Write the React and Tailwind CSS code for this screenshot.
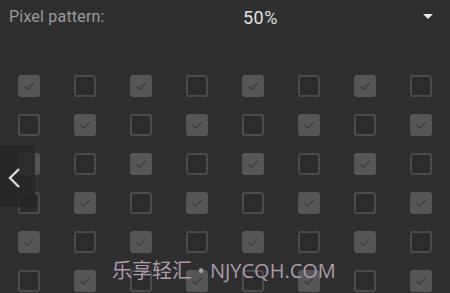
import React from "react";

function Box({ checked }) {
  if (checked) {
    return (
      <div className="w-[22px] h-[22px] rounded-[3px] bg-[#565656] flex items-center justify-center">
        <svg width="14" height="14" viewBox="0 0 14 14">
          <path d="M2.5 7.2 L5.6 10.2 L11.5 4" fill="none" stroke="#3e3e3e" strokeWidth="1.6" />
        </svg>
      </div>
    );
  }
  return <div className="w-[22px] h-[22px] rounded-[3px] border-2 border-[#4b4b4b] bg-[#2c2c2c]" />;
}

export default function App() {
  const rows = [0, 1, 2, 3, 4, 5];
  const cols = [0, 1, 2, 3, 4, 5, 6, 7];
  return (
    <div className="relative w-[450px] h-[293px] overflow-hidden bg-[#2f2f2f]" style={{ fontFamily: "Roboto, 'Noto Sans CJK SC', sans-serif" }}>
      <div className="flex items-center h-[34px] pl-[9px] pr-[17px]">
        <div className="w-[234px] text-[16px] text-[#9a9a9a] tracking-[0.2px]">Pixel pattern:</div>
        <div className="flex-1 text-[18px] text-[#e0e0e0] tracking-[0.5px]">50%</div>
        <svg width="10" height="6" viewBox="0 0 10 6">
          <path d="M0 0 L10 0 L5 5 Z" fill="#e8e8e8" />
        </svg>
      </div>
      <div className="flex flex-col gap-[17px] px-[18px] pt-[41px]">
        {rows.map((r) => (
          <div key={r} className="flex justify-between">
            {cols.map((c) => (
              <Box key={c} checked={(r + c) % 2 === 0} />
            ))}
          </div>
        ))}
      </div>
      <div className="absolute left-0 top-[145px] w-[35px] h-[62px] bg-[#262626]/85 flex items-center justify-center pr-[8px] pt-[4px]">
        <svg width="16" height="22" viewBox="0 0 16 22">
          <path d="M13 2 L4 11 L13 20" fill="none" stroke="#d8d8d8" strokeWidth="2.4" />
        </svg>
      </div>
      <div className="absolute left-[112px] top-[257px] text-[20px] leading-[28px] text-[#aa9aaa]" style={{ fontFamily: "'Open Sans', 'Noto Sans CJK SC', sans-serif" }}>
        乐享轻汇 • NJYCQH.COM
      </div>
    </div>
  );
}
